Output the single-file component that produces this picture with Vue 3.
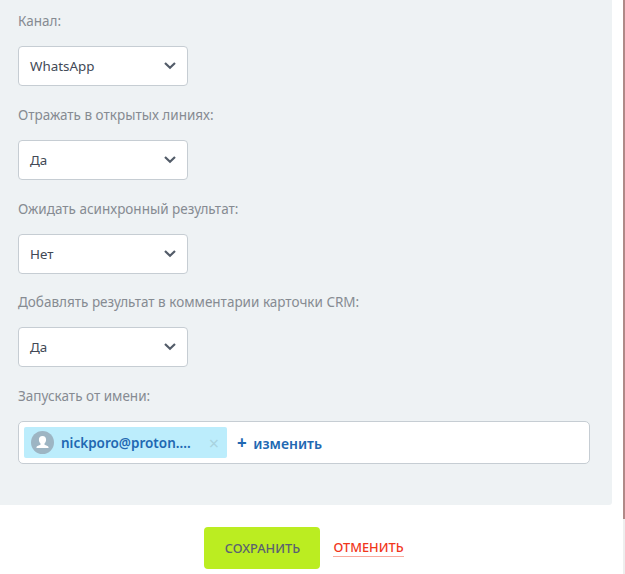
<script setup>
const fields = [
  { label: 'Канал:', value: 'WhatsApp' },
  { label: 'Отражать в открытых линиях:', value: 'Да' },
  { label: 'Ожидать асинхронный результат:', value: 'Нет' },
  { label: 'Добавлять результат в комментарии карточки CRM:', value: 'Да' },
]
</script>

<template>
  <div class="page">
    <div class="main">
      <div class="panel">
        <div v-for="f in fields" :key="f.label" class="field">
          <div class="label">{{ f.label }}</div>
          <div class="select">
            <span>{{ f.value }}</span>
            <svg class="chev" width="14" height="10" viewBox="0 0 14 10">
              <path d="M3 2 8 6.800 13 2" fill="none" stroke="#535c69" stroke-width="2.200" />
            </svg>
          </div>
        </div>
        <div class="label">Запускать от имени:</div>
        <div class="users">
          <div class="tag">
            <span class="avatar">
              <svg width="23" height="23" viewBox="0 0 23 23">
                <circle cx="11.500" cy="11.500" r="11.500" fill="#9db5c3" />
                <path d="M11.500 5c-2.400 0-3.600 1.700-3.600 3.800 0 1.500.6 2.900 1.600 3.700v1.200c-1.600.6-3.600 1.100-4 2.300v1h12v-1c-.4-1.200-2.400-1.700-4-2.300v-1.200c1-.8 1.600-2.200 1.600-3.700C15.100 6.700 13.900 5 11.500 5z" fill="#fff" />
              </svg>
            </span>
            <span class="email">nickporo@proton....</span>
            <span class="close">×</span>
          </div>
          <span class="change"><b>+</b> изменить</span>
        </div>
      </div>
      <div class="actions">
        <button class="save">СОХРАНИТЬ</button>
        <span class="cancel">ОТМЕНИТЬ</span>
      </div>
    </div>
    <div class="strip"></div>
  </div>
</template>

<style>
html, body { margin: 0; background: #fff; }
</style>

<style scoped>
.page {
  width: 625px;
  height: 574px;
  overflow: hidden;
  display: flex;
  justify-content: space-between;
  font-family: "Noto Sans", sans-serif;
  font-size: 13.400px;
}
.main { width: 612px; }
.panel {
  height: 505px;
  box-sizing: border-box;
  background: #eef2f4;
  border-radius: 0 0 3px 0;
  padding: 13px 22px 0 18px;
}
.field { height: 93.800px; }
.label {
  color: #868b92;
  font-size: 13.500px;
  line-height: 17px;
  height: 33px;
}
.select {
  box-sizing: border-box;
  width: 170px;
  height: 40px;
  background: #fff;
  border: 1px solid #c6cdd3;
  border-radius: 4px;
  display: flex;
  align-items: center;
  justify-content: space-between;
  padding: 0 11px;
  color: #424956;
}
.users {
  box-sizing: border-box;
  height: 43px;
  background: #fff;
  border: 1px solid #c6cdd3;
  border-radius: 5px;
  padding: 4px 5px;
  display: flex;
  align-items: center;
}
.tag {
  width: 203px;
  height: 31px;
  background: #bcedfc;
  border-radius: 2px;
  display: flex;
  align-items: center;
  padding-left: 7px;
  box-sizing: border-box;
}
.avatar { display: flex; margin-right: 7px; }
.email { color: #2168b2; font-weight: 600; font-size: 13.500px; white-space: nowrap; }
.close { color: #a9d3df; font-size: 18px; margin-left: auto; margin-right: 8px; }
.change { color: #2168b2; font-weight: 600; font-size: 14px; margin-left: 10px; }
.change b { font-size: 17px; font-weight: 700; margin-right: 3px; }
.actions {
  display: flex;
  align-items: center;
  justify-content: center;
  padding: 22px 4px 0 0;
}
.save {
  width: 116px;
  height: 42px;
  border: 0;
  border-radius: 4px;
  background: #bbed21;
  color: #5a6270;
  font: 500 12.800px "Noto Sans", sans-serif;
  margin-right: 13px;
}
.cancel {
  color: #f1361b;
  font-size: 12.800px;
  font-weight: 500;
  border-bottom: 1px solid #f9a99d;
  line-height: 17px;
}
.strip {
  width: 2px;
  height: 574px;
  background: linear-gradient(#b08a88 0, #b08a88 519px, #eeeeee 519px);
}
</style>
